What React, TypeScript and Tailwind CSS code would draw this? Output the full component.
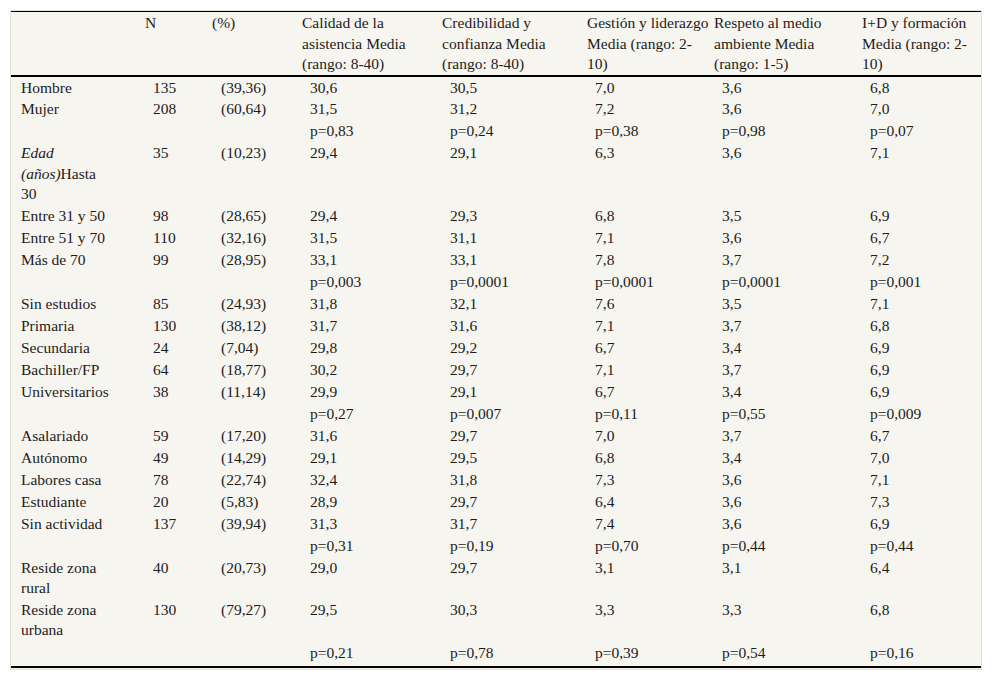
import React from "react"

type Row = {
  label?: React.ReactNode
  n?: string
  pct?: string
  vals: string[]
  h?: string
}

const headers = [
  ["Calidad de la", "asistencia Media", "(rango: 8-40)"],
  ["Credibilidad y", "confianza Media", "(rango: 8-40)"],
  ["Gestión y liderazgo", "Media (rango: 2-", "10)"],
  ["Respeto al medio", "ambiente Media", "(rango: 1-5)"],
  ["I+D y formación", "Media (rango: 2-", "10)"],
]

const rows: Row[] = [
  { label: "Hombre", n: "135", pct: "(39,36)", vals: ["30,6", "30,5", "7,0", "3,6", "6,8"] },
  { label: "Mujer", n: "208", pct: "(60,64)", vals: ["31,5", "31,2", "7,2", "3,6", "7,0"] },
  { vals: ["p=0,83", "p=0,24", "p=0,38", "p=0,98", "p=0,07"] },
  {
    label: (
      <>
        <i>Edad</i>
        <br />
        <i>(años)</i>Hasta
        <br />
        30
      </>
    ),
    n: "35",
    pct: "(10,23)",
    vals: ["29,4", "29,1", "6,3", "3,6", "7,1"],
    h: "h-[62px]",
  },
  { label: "Entre 31 y 50", n: "98", pct: "(28,65)", vals: ["29,4", "29,3", "6,8", "3,5", "6,9"] },
  { label: "Entre 51 y 70", n: "110", pct: "(32,16)", vals: ["31,5", "31,1", "7,1", "3,6", "6,7"] },
  { label: "Más de 70", n: "99", pct: "(28,95)", vals: ["33,1", "33,1", "7,8", "3,7", "7,2"] },
  { vals: ["p=0,003", "p=0,0001", "p=0,0001", "p=0,0001", "p=0,001"] },
  { label: "Sin estudios", n: "85", pct: "(24,93)", vals: ["31,8", "32,1", "7,6", "3,5", "7,1"] },
  { label: "Primaria", n: "130", pct: "(38,12)", vals: ["31,7", "31,6", "7,1", "3,7", "6,8"] },
  { label: "Secundaria", n: "24", pct: "(7,04)", vals: ["29,8", "29,2", "6,7", "3,4", "6,9"] },
  { label: "Bachiller/FP", n: "64", pct: "(18,77)", vals: ["30,2", "29,7", "7,1", "3,7", "6,9"] },
  { label: "Universitarios", n: "38", pct: "(11,14)", vals: ["29,9", "29,1", "6,7", "3,4", "6,9"] },
  { vals: ["p=0,27", "p=0,007", "p=0,11", "p=0,55", "p=0,009"] },
  { label: "Asalariado", n: "59", pct: "(17,20)", vals: ["31,6", "29,7", "7,0", "3,7", "6,7"] },
  { label: "Autónomo", n: "49", pct: "(14,29)", vals: ["29,1", "29,5", "6,8", "3,4", "7,0"] },
  { label: "Labores casa", n: "78", pct: "(22,74)", vals: ["32,4", "31,8", "7,3", "3,6", "7,1"] },
  { label: "Estudiante", n: "20", pct: "(5,83)", vals: ["28,9", "29,7", "6,4", "3,6", "7,3"] },
  { label: "Sin actividad", n: "137", pct: "(39,94)", vals: ["31,3", "31,7", "7,4", "3,6", "6,9"] },
  { vals: ["p=0,31", "p=0,19", "p=0,70", "p=0,44", "p=0,44"] },
  {
    label: (
      <>
        Reside zona
        <br />
        rural
      </>
    ),
    n: "40",
    pct: "(20,73)",
    vals: ["29,0", "29,7", "3,1", "3,1", "6,4"],
    h: "h-[42px]",
  },
  {
    label: (
      <>
        Reside zona
        <br />
        urbana
      </>
    ),
    n: "130",
    pct: "(79,27)",
    vals: ["29,5", "30,3", "3,3", "3,3", "6,8"],
    h: "h-[43px]",
  },
  { vals: ["p=0,21", "p=0,78", "p=0,39", "p=0,54", "p=0,16"], h: "h-[25px]" },
]

export default function App() {
  return (
    <div
      className="min-h-[679px] bg-white pl-[10px] pt-[10px] text-[#1c1c1c]"
      style={{ fontFamily: '"Liberation Serif", "Times New Roman", serif' }}
    >
      <div className="w-[972px] border border-[#e4e2dc] bg-[#f7f5ef] pb-[1px]">
        <table className="w-full table-fixed border-collapse text-[15.5px]">
          <colgroup>
            <col className="w-[132px]" />
            <col className="w-[67px]" />
            <col className="w-[90px]" />
            <col className="w-[140px]" />
            <col className="w-[145px]" />
            <col className="w-[127px]" />
            <col className="w-[148px]" />
            <col className="w-[121px]" />
          </colgroup>
          <thead>
            <tr className="border-t border-b-2 border-black leading-[20.6px]">
              <th className="p-0" />
              <th className="whitespace-nowrap p-0 pt-[1px] pl-[2px] text-left align-top font-normal">N</th>
              <th className="whitespace-nowrap p-0 pt-[1px] pl-[2px] text-left align-top font-normal">(%)</th>
              {headers.map((h, i) => (
                <th key={i} className="whitespace-nowrap p-0 pt-[1px] pl-[2px] text-left align-top font-normal">
                  {h[0]}
                  <br />
                  {h[1]}
                  <br />
                  {h[2]}
                </th>
              ))}
            </tr>
          </thead>
          <tbody className="border-b-2 border-black">
            {rows.map((r, i) => (
              <tr key={i} className={`leading-[20.5px] ${r.h ?? "h-[22px]"}`}>
                <td className="whitespace-nowrap p-0 pt-[1px] pl-[10px] align-top">{r.label}</td>
                <td className="whitespace-nowrap p-0 pt-[1px] pl-[10px] align-top">{r.n}</td>
                <td className="whitespace-nowrap p-0 pt-[1px] pl-[11px] align-top">{r.pct}</td>
                {r.vals.map((v, j) => (
                  <td key={j} className="whitespace-nowrap p-0 pt-[1px] pl-[10px] align-top">
                    {v}
                  </td>
                ))}
              </tr>
            ))}
          </tbody>
        </table>
      </div>
    </div>
  )
}
